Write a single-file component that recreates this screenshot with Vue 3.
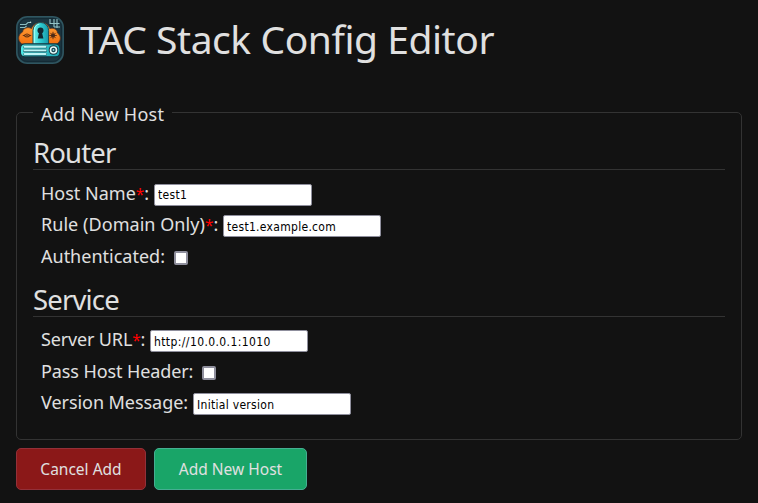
<script setup>
import { reactive } from 'vue'

const sections = reactive([
  {
    title: 'Router',
    fields: [
      { id: 'host', label: 'Host Name', required: true, type: 'text', value: 'test1' },
      { id: 'rule', label: 'Rule (Domain Only)', required: true, type: 'text', value: 'test1.example.com' },
      { id: 'auth', label: 'Authenticated', type: 'checkbox', value: false },
    ],
  },
  {
    title: 'Service',
    fields: [
      { id: 'url', label: 'Server URL', required: true, type: 'text', value: 'http://10.0.0.1:1010' },
      { id: 'pass', label: 'Pass Host Header', type: 'checkbox', value: false },
      { id: 'version', label: 'Version Message', type: 'text', value: 'Initial version' },
    ],
  },
])
</script>

<template>
  <main class="page">
    <header class="header">
      <svg class="logo" viewBox="0 0 48 48" aria-hidden="true">
        <defs>
          <linearGradient id="cloud" x1="0" y1="0" x2="0" y2="1">
            <stop offset="0" stop-color="#ffa43c" />
            <stop offset="1" stop-color="#f4700f" />
          </linearGradient>
          <linearGradient id="lock" x1="0" y1="0" x2="1" y2="0">
            <stop offset="0" stop-color="#7af5ec" />
            <stop offset=".45" stop-color="#31cfd3" />
            <stop offset="1" stop-color="#1798a8" />
          </linearGradient>
          <linearGradient id="server" x1="0" y1="0" x2="1" y2="0">
            <stop offset="0" stop-color="#4feae6" />
            <stop offset="1" stop-color="#1ba5b2" />
          </linearGradient>
        </defs>
        <rect x=".8" y=".8" width="46.4" height="46.4" rx="10.5" fill="#1c3641" stroke="#2f5661" stroke-width="1.5" />
        <rect x="2.6" y="2.6" width="42.8" height="42.8" rx="8.5" fill="none" stroke="#142a34" stroke-width="1" />
        <path d="M4 8.5h6l2-2h3M4 11.5h5l1.5-1.5" fill="none" stroke="#8bbcbf" stroke-width="1.1" />
        <circle cx="14.5" cy="6.3" r=".8" fill="#b9dddc" />
        <path d="M34 3v4.5h4V3M37.5 7.5h6M41 3v9M38 11h6M38 7.5V11" fill="none" stroke="#94c4c8" stroke-width="1.1" />
        <path d="M7.5 28.5C1.8 27 .8 19 6.5 16c.6-4 5.5-5.5 9-3.5C17 8.5 20.5 6.5 24.7 6.5c4.5 0 8.2 2.6 9 6.1C38 11.5 41.3 13.5 41.5 17c4.5 3 3.6 9.5-2 11.5z" fill="url(#cloud)" stroke="#5b3421" stroke-width=".8" />
        <path d="M17 29V14.3a7.8 7.8 0 0 1 15.6 0V29z" fill="url(#lock)" stroke="#1c4c57" stroke-width="1" />
        <path d="M18.4 28V14a6.4 6.4 0 0 1 5-6" fill="none" stroke="#a4fff5" stroke-width="1" />
        <circle cx="24.5" cy="14.5" r="3" fill="#122832" />
        <path d="M23.2 16h2.7l1.5 6.5h-5.6z" fill="#122832" />
        <path d="M8.2 19.5q2.8-3 5.6 0q-2.8 3-5.6 0M6.8 19.5h1.4M13.8 19.5h1.4" fill="none" stroke="#653414" stroke-width="1.1" />
        <circle cx="11" cy="19.5" r=".8" fill="#653414" />
        <path d="M37 15.8v7.4M33.3 19.5h7.4M34.4 16.9l5.2 5.2M39.6 16.9l-5.2 5.2" stroke="#6a3514" stroke-width="1" />
        <circle cx="37" cy="19.5" r="2" fill="#4e2b18" />
        <rect x="4.4" y="27.8" width="39.6" height="13" rx="4.5" fill="url(#server)" stroke="#12313c" stroke-width="1.2" />
        <path d="M8.5 31h21M8.5 34.7h21M8.5 38.2h21" stroke="#286a75" stroke-width="3" stroke-linecap="round" />
        <path d="M8.5 30.8h21M8.5 34.4h21M8.5 38h21" stroke="#bcf5f5" stroke-width="1.9" stroke-linecap="round" />
        <circle cx="37.5" cy="34" r="4.8" fill="#173641" />
        <circle cx="37.5" cy="34" r="3" fill="#1b4552" stroke="#e1f9f8" stroke-width="1.6" />
        <circle cx="37.5" cy="34" r=".9" fill="#8fd7dd" />
      </svg>
      <h1>TAC Stack Config Editor</h1>
    </header>

    <form @submit.prevent>
      <fieldset>
        <legend>Add New Host</legend>
        <section v-for="section in sections" :key="section.title">
          <h2>{{ section.title }}</h2>
          <div class="fields">
            <div v-for="field in section.fields" :key="field.id" class="row">
              <label :for="field.id" :class="field.id">{{ field.label }}<span v-if="field.required" class="required">*</span>:</label>
              <input v-if="field.type === 'text'" :id="field.id" v-model="field.value" type="text" />
              <input v-else :id="field.id" v-model="field.value" type="checkbox" />
            </div>
          </div>
        </section>
      </fieldset>
      <div class="actions">
        <button type="button" class="cancel">Cancel Add</button>
        <button type="submit" class="add">Add New Host</button>
      </div>
    </form>
  </main>
</template>

<style>
body {
  margin: 0;
  background: #121212;
}
</style>

<style scoped>
* { box-sizing: border-box; }
.page {
  height: 503px;
  padding: 16px;
  overflow: hidden;
  color: #e0e0e0;
  font-family: "Noto Sans", "Open Sans", sans-serif;
}
.header {
  display: flex;
  gap: 16px;
  height: 96px;
}
.logo { width: 48px; height: 48px; flex: none; }
h1, h2 { margin: 0; font-weight: 400; white-space: nowrap; }
h1 { font-size: 39px; line-height: 45px; letter-spacing: -.45px; }
fieldset {
  position: relative;
  height: 328px;
  margin: 0;
  padding: 23px 16px 0;
  border: 1px solid #333;
  border-radius: 5px;
}
legend {
  position: absolute;
  top: -14px;
  left: 16px;
  width: 139px;
  height: 28px;
  padding: 0 8px;
  background: #121212;
  font-size: 18px;
  line-height: 30px;
  letter-spacing: .27px;
  white-space: nowrap;
}
h2 {
  height: 34px;
  border-bottom: 1px solid #333;
  font-size: 27.5px;
  line-height: 33px;
  letter-spacing: -.85px;
}
section { height: 146.5px; }
.fields { padding: 9.6px 8px 0; }
.row { display: flex; height: 31.5px; align-items: flex-start; }
label {
  flex: none;
  height: 30px;
  font-size: 18px;
  line-height: 26px;
  white-space: nowrap;
}
.host { width: 113px; }
.rule { width: 182px; letter-spacing: .05px; }
.auth { width: 133px; }
.url { width: 109px; letter-spacing: -.15px; }
.pass { width: 161px; letter-spacing: -.1px; }
.version { width: 152px; letter-spacing: -.05px; }
.required { color: #f00; font-size: 15.5px; }
input[type="text"] {
  width: 158px;
  height: 22px;
  margin: 4px 0 0;
  padding: 1px 3px 0;
  border: 1px solid #8f8f9d;
  border-radius: 2px;
  outline: 0;
  background: #fff;
  color: #000;
  font: 12px "DejaVu Sans Condensed", "DejaVu Sans", sans-serif;
  letter-spacing: .3px;
}
#url { letter-spacing: .4px; }
input[type="checkbox"] {
  width: 14px;
  height: 14px;
  margin: 8px 0 0;
  appearance: none;
  border: 2px solid #8f8f9d;
  border-radius: 2px;
  background: #fff;
}
.actions { display: flex; gap: 8px; margin-top: 8px; }
button {
  height: 42px;
  padding: 0;
  border: 1px solid;
  border-radius: 5px;
  color: #e0e0e0;
  font: 15.5px/40px "Noto Sans", "Open Sans", sans-serif;
  white-space: nowrap;
}
.cancel { width: 130px; background: #8b1818; border-color: #933039; }
.add { width: 153px; background: #19a568; border-color: #45ae92; }
</style>
